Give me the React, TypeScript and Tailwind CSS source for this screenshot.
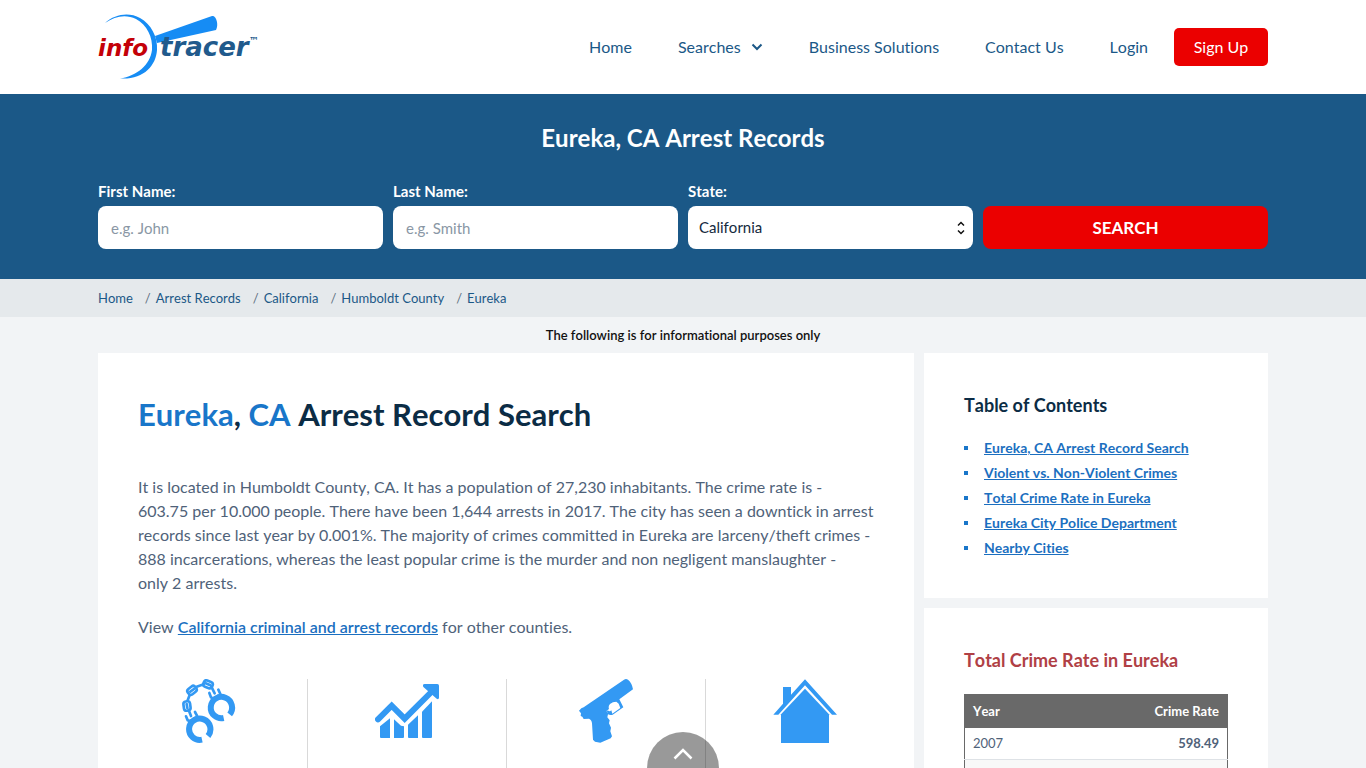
import type { FC, ReactNode } from 'react';
import clsx from 'clsx';

const navLinks = ['Business Solutions', 'Contact Us', 'Login'];

const crumbs = [
  'Home',
  'Arrest Records',
  'California',
  'Humboldt County',
  'Eureka',
];

const contents = [
  'Eureka, CA Arrest Record Search',
  'Violent vs. Non-Violent Crimes',
  'Total Crime Rate in Eureka',
  'Eureka City Police Department',
  'Nearby Cities',
];

const crimeRates = [{ year: '2007', rate: '598.49' }];

const Container: FC<{ className?: string; children: ReactNode }> = ({
  className,
  children,
}) => (
  <div className={clsx('mx-auto w-full max-w-[1170px]', className)}>
    {children}
  </div>
);

const Logo: FC = () => (
  <svg
    width="164"
    height="70"
    viewBox="0 0 164 70"
    role="img"
    aria-label="InfoTracer"
  >
    <path
      d="M7 11C17 2 31 0 42 6C53 12 60 25 59 38C58 54 45 68 22 66.500C39 64 52 53 54 38C55 25 49 13 38 7C28 2 17 4 7 11Z"
      fill="#168cf4"
    />
    <path d="M57 24L114 4C118 3 121 12 118 18L59 31Z" fill="#168cf4" />
    <g
      fontFamily="'DejaVu Sans', sans-serif"
      fontStyle="italic"
      fontWeight="700"
    >
      <text x="0" y="44" fill="#c40008" fontSize="23">
        info
      </text>
      <text x="62" y="44" fill="#215a8c" fontSize="26">
        tracer
      </text>
      <text x="151" y="32" fill="#215a8c" fontSize="10">
        ™
      </text>
    </g>
  </svg>
);

const Header: FC = () => (
  <header className="bg-white">
    <Container className="flex h-[94px] items-center justify-between">
      <a href="#home">
        <Logo />
      </a>
      <nav className="flex items-center gap-[46px] text-base text-[#1b5887]">
        <a href="#home">Home</a>
        <button type="button" className="flex items-center gap-2.5">
          Searches
          <svg width="12" height="8" viewBox="0 0 12 8" fill="none">
            <path
              d="M1.500 1.500L6 6L10.500 1.500"
              stroke="#1b5887"
              strokeWidth="2"
            />
          </svg>
        </button>
        {navLinks.map((label) => (
          <a key={label} href="#nav">
            {label}
          </a>
        ))}
        <a
          href="#signup"
          className="-ml-5 flex h-[38px] w-[94px] items-center justify-center rounded-[5px] bg-[#eb0000] text-white"
        >
          Sign Up
        </a>
      </nav>
    </Container>
  </header>
);

const TextField: FC<{ id: string; label: string; placeholder: string }> = ({
  id,
  label,
  placeholder,
}) => (
  <div>
    <label
      htmlFor={id}
      className="block pb-[5px] text-[15px] leading-5 font-bold"
    >
      {label}
    </label>
    <input
      id={id}
      type="text"
      placeholder={placeholder}
      className="block h-[43px] w-full rounded-lg bg-white px-[13px] text-[15px] text-[#14293d] placeholder:text-[#8a97a5]"
    />
  </div>
);

const SearchForm: FC = () => (
  <section className="bg-[#1b5887] pt-[26px] pb-[30px] text-white">
    <Container>
      <h1 className="text-center text-2xl leading-9 font-bold">
        Eureka, CA Arrest Records
      </h1>
      <form className="grid grid-cols-4 items-end gap-2.5 pt-[25px]">
        <TextField id="firstName" label="First Name:" placeholder="e.g. John" />
        <TextField id="lastName" label="Last Name:" placeholder="e.g. Smith" />
        <div>
          <label
            htmlFor="state"
            className="block pb-[5px] text-[15px] leading-5 font-bold"
          >
            State:
          </label>
          <div className="relative">
            <select
              id="state"
              className="block h-[43px] w-full appearance-none rounded-lg bg-white px-[11px] text-[15px] text-[#14293d]"
            >
              <option>California</option>
            </select>
            <svg
              className="pointer-events-none absolute top-[15px] right-2"
              width="8"
              height="14"
              viewBox="0 0 8 14"
              fill="none"
              stroke="#111"
              strokeWidth="1.500"
            >
              <path d="M1 4.500L4 1.500L7 4.500M1 9.500L4 12.500L7 9.500" />
            </svg>
          </div>
        </div>
        <button
          type="button"
          className="h-[43px] rounded-lg bg-[#eb0000] text-[17px] font-bold"
        >
          SEARCH
        </button>
      </form>
    </Container>
  </section>
);

const Breadcrumbs: FC = () => (
  <nav className="bg-[#e5e9ec]">
    <Container>
      <ol className="flex h-[38px] items-center gap-3 pt-px text-[13px] text-[#1b5887]">
        {crumbs.map((crumb, i) => (
          <li key={crumb} className="flex gap-[5px]">
            {i > 0 && <span className="text-[#5d6f80]">/</span>}
            <a href="#crumb">{crumb}</a>
          </li>
        ))}
      </ol>
    </Container>
  </nav>
);

const ChainLink: FC<{ transform: string }> = ({ transform }) => (
  <rect
    x="-14"
    y="-10"
    width="28"
    height="20"
    rx="8"
    fill="none"
    strokeWidth="8"
    transform={transform}
  />
);

const HandcuffsIcon: FC = () => (
  <svg width="64" height="64" viewBox="138 57 192 192" fill="none">
    <g stroke="#3399f3" strokeWidth="18">
      <path d="M281 174A32 32 0 1 1 299 163" />
      <path d="M216 239A32 32 0 1 1 234 228" />
    </g>
    <g stroke="#3399f3">
      <ChainLink transform="translate(234 73) rotate(20)" />
      <ChainLink transform="translate(186 91) rotate(-38)" />
      <ChainLink transform="translate(171 138) rotate(82)" />
      <g strokeWidth="8" strokeLinecap="round">
        <path d="M227 70L241 76M200 80L221 73M181 95L192 87M173 121L179 105M170 132L172 144" />
        <path d="M244 80L254 100M176 150L183 168" />
        <path d="M238 99L243 112Q253 119 265 107M265 89L271 102" />
        <path d="M168 169L173 181Q184 186 196 173M195 156L202 169" />
      </g>
    </g>
  </svg>
);

const ChartIcon: FC = () => (
  <svg width="64" height="64" viewBox="735 57 192 192" fill="#3399f3">
    <path
      d="M744 178L785 137L824 176L907 93"
      fill="none"
      stroke="#3399f3"
      strokeWidth="18"
      strokeLinecap="round"
    />
    <path d="M879 76Q879 72 884 72H922Q927 72 927 77V113Q926 120 920 116L881 82Q878 79 879 76Z" />
    <path d="M750 199L780 175V234H753Q750 234 750 231Z" />
    <path d="M792 178L813 197L822 199V231Q822 234 819 234H792Z" />
    <path d="M834 194L864 166V234H837Q834 234 834 231Z" />
    <path d="M876 155L906 124V231Q906 234 903 234H879Q876 234 876 231Z" />
  </svg>
);

const GunIcon: FC = () => (
  <svg width="64" height="64" viewBox="222 57 192 192" fill="#3399f3">
    <path
      fillRule="evenodd"
      d="M372 59Q378 55 384 59Q396 69 399 88L358 118L370 142L338 164Q331 167 324 163L322 172L329 181L327 190L333 203L331 214L336 229L332 235L301 248L285 245L279 239L276 190Q275 179 267 176L251 177L247 170L242 168L243 160L237 152L244 145L251 142ZM330 132Q324 138 327 147L319 153L324 158L334 151L337 161L361 144L356 131L349 125Q338 125 330 132Z"
    />
    <path d="M318 151L328 153L335 161H326Z" />
  </svg>
);

const HouseIcon: FC = () => (
  <svg width="64" height="64" viewBox="819 57 192 192" fill="#3399f3">
    <path d="M820 164L849 131V81H873V104L915 58L1011 164H996L915 76L835 164Z" />
    <path d="M915 86L987 163V249H843V163Z" />
  </svg>
);

const icons = [HandcuffsIcon, ChartIcon, GunIcon, HouseIcon];

const Article: FC = () => (
  <main className="min-w-0 flex-1 bg-white px-10 pt-10 text-base leading-6 text-[#4f6279]">
    <h2 className="text-[31px] leading-[42px] font-bold text-[#0b2c45]">
      <span className="text-[#1976c9]">Eureka</span>,{' '}
      <span className="text-[#1976c9]">CA</span> Arrest Record Search
    </h2>
    <p className="pt-10">
      It is located in Humboldt County, CA. It has a population of 27,230
      inhabitants. The crime rate is - 603.75 per 10.000 people. There have been
      1,644 arrests in 2017. The city has seen a downtick in arrest records
      since last year by 0.001%. The majority of crimes committed in Eureka are
      larceny/theft crimes - 888 incarcerations, whereas the least popular crime
      is the murder and non negligent manslaughter - only&nbsp;2 arrests.
    </p>
    <p className="pt-5">
      View{' '}
      <a href="#california" className="font-semibold text-[#1b6fc0] underline">
        California criminal and arrest records
      </a>{' '}
      for other counties.
    </p>
    <ul className="-mx-[30px] mt-10 grid grid-cols-4">
      {icons.map((Icon, i) => (
        <li
          key={i}
          className={clsx(
            'flex h-[120px] justify-center',
            i > 0 && 'border-l border-[#d9d9d9]'
          )}
        >
          <Icon />
        </li>
      ))}
    </ul>
  </main>
);

const Sidebar: FC = () => (
  <aside className="flex w-[344px] flex-col gap-2.5">
    <section className="bg-white px-10 pt-10 pb-[38px]">
      <h3 className="text-lg leading-6 font-bold text-[#0b2c45]">
        Table of Contents
      </h3>
      <ul className="pt-[18px] text-sm leading-[25px]">
        {contents.map((item) => (
          <li key={item} className="flex items-center gap-4">
            <span className="size-1 bg-[#1976c9]" />
            <a href="#section" className="font-bold text-[#1b6fc0] underline">
              {item}
            </a>
          </li>
        ))}
      </ul>
    </section>
    <section className="flex-1 bg-white px-10 pt-10">
      <h3 className="text-lg leading-6 font-bold text-[#b04045]">
        Total Crime Rate in Eureka
      </h3>
      <table className="mt-[22px] w-full border border-[#696969] text-[13px]">
        <thead className="bg-[#696969] text-white">
          <tr className="h-[33px]">
            <th className="px-2 text-left font-bold">Year</th>
            <th className="px-2 text-right font-bold">Crime Rate</th>
          </tr>
        </thead>
        <tbody className="text-[#4f6279]">
          {crimeRates.map(({ year, rate }) => (
            <tr key={year} className="h-8 border-b border-[#dee2e6]">
              <td className="px-2">{year}</td>
              <td className="px-2 text-right font-bold">{rate}</td>
            </tr>
          ))}
          <tr className="h-8 bg-[#f8f8f8]">
            <td />
            <td />
          </tr>
        </tbody>
      </table>
    </section>
  </aside>
);

const BackToTop: FC = () => (
  <button
    type="button"
    aria-label="Back to top"
    className="fixed inset-x-0 bottom-0 mx-auto flex h-9 w-[72px] justify-center rounded-t-full bg-black/40 pt-4"
  >
    <svg width="20" height="12" viewBox="0 0 20 12" fill="none">
      <path
        d="M1.500 10.500L10 2L18.500 10.500"
        stroke="#fff"
        strokeWidth="2.500"
      />
    </svg>
  </button>
);

export default function App() {
  return (
    <div className="h-screen overflow-hidden bg-[#f2f4f6] font-[Lato,sans-serif] [font-kerning:none] [font-variant-ligatures:none]">
      <Header />
      <SearchForm />
      <Breadcrumbs />
      <p className="text-center text-[13px] leading-9 font-semibold text-[#111]">
        The following is for informational purposes only
      </p>
      <Container className="flex gap-2.5">
        <Article />
        <Sidebar />
      </Container>
      <BackToTop />
    </div>
  );
}
